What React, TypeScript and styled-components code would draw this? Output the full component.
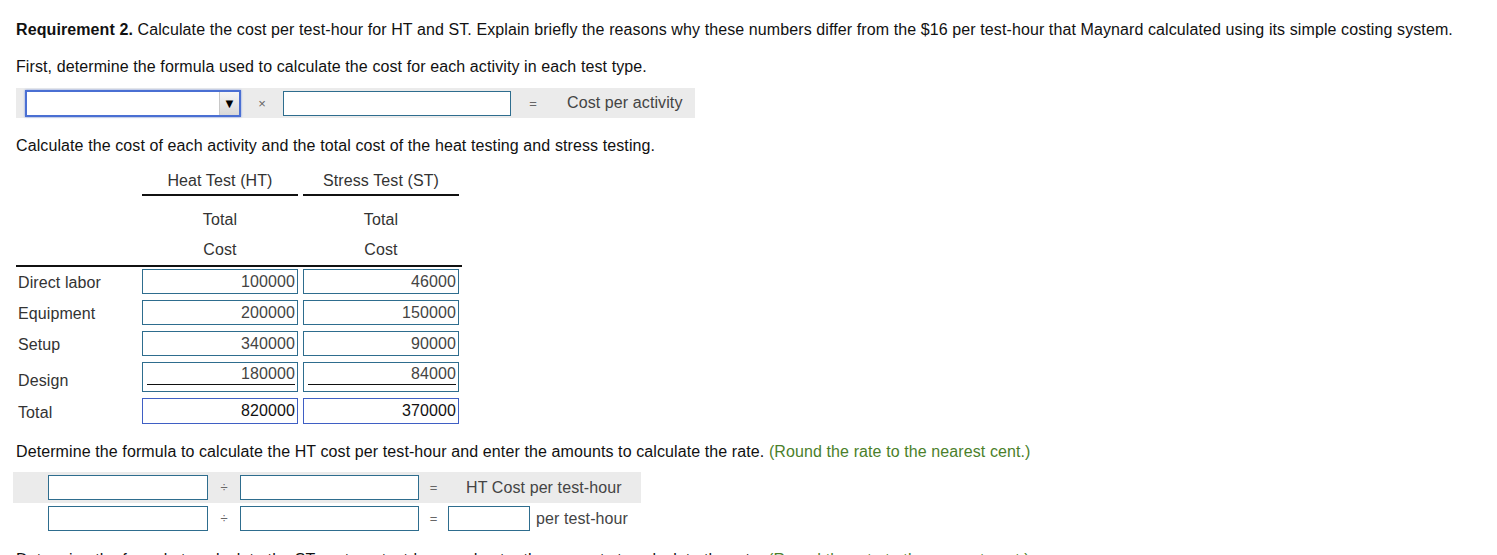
import React from "react";
import styled, { createGlobalStyle } from "styled-components";

const GlobalStyle = createGlobalStyle`
  body {
    margin: 0;
    background: #fff;
    font-family: "Liberation Sans", Arial, sans-serif;
    font-size: 16px;
    letter-spacing: 0.1px;
    color: #222;
  }
`;

const Page = styled.div`
  padding: 21px 0 0 16px;
  height: 555px;
  box-sizing: border-box;
  overflow: hidden;
`;

const Para = styled.p<{ $top: number }>`
  margin: ${(p) => p.$top}px 0 0;
  line-height: 18px;
  color: #111;
  white-space: nowrap;
`;

const Hint = styled.span`
  color: #4b7f2b;
`;

// formula bar
const FormulaBar = styled.div`
  margin-top: 12px;
  width: 679px;
  height: 30px;
  background: #ebebeb;
  display: flex;
  align-items: center;
  padding-left: 9px;
  box-sizing: border-box;
`;

const Select = styled.div`
  width: 216px;
  height: 27px;
  box-sizing: border-box;
  border: 2px solid #4a6fd3;
  box-shadow: 0 0 2px #7b95e0;
  background: #fff;
  display: flex;
  justify-content: flex-end;
`;

const SelectArrow = styled.div`
  width: 19px;
  background: linear-gradient(#f6f6f6, #d8d8d8);
  border-left: 1px solid #c8c8c8;
  display: flex;
  align-items: center;
  justify-content: center;
  font-size: 13px;
  color: #000;
`;

const Op = styled.span<{ $w: number }>`
  width: ${(p) => p.$w}px;
  text-align: center;
  color: #666;
  font-size: 13px;
  flex-shrink: 0;
`;

const Box = styled.div<{ $w: number; $h?: number }>`
  width: ${(p) => p.$w}px;
  height: ${(p) => p.$h ?? 25}px;
  box-sizing: border-box;
  border: 1px solid #2e6d8e;
  background: #fff;
  flex-shrink: 0;
`;

const BarLabel = styled.span<{ $ml: number }>`
  margin-left: ${(p) => p.$ml}px;
  color: #444;
  white-space: nowrap;
`;

// table
const Table = styled.div`
  margin-top: 13px;
  width: 446px;
`;

const HeadRow = styled.div`
  display: flex;
  padding-left: 126px;
  gap: 5px;
`;

const HeadCell = styled.div`
  width: 156px;
  text-align: center;
  color: #333;
  line-height: 26px;
  border-bottom: 2px solid #111;
`;

const SubHead = styled.div`
  display: flex;
  padding-left: 126px;
  gap: 5px;
  margin-top: 9px;
  border-bottom: 2px solid #111;
`;

const SubCell = styled.div`
  width: 156px;
  text-align: center;
  color: #333;
  line-height: 30px;
`;

const Rows = styled.div`
  display: flex;
  flex-direction: column;
  gap: 6px;
  margin-top: 2px;
`;

const Row = styled.div`
  display: flex;
  align-items: flex-end;
  gap: 5px;
`;

const RowLabel = styled.div`
  width: 119px;
  padding-left: 2px;
  color: #333;
  line-height: 22px;
`;

const Amount = styled.div<{ $h: number; $total?: boolean; $under?: boolean }>`
  width: 156px;
  height: ${(p) => p.$h}px;
  box-sizing: border-box;
  border: 1px solid ${(p) => (p.$total ? "#3f5fc4" : "#2e6d8e")};
  padding: 0 2px 0 4px;
  display: flex;
  flex-direction: column;
  justify-content: ${(p) => (p.$under ? "flex-start" : "center")};
  color: ${(p) => (p.$total ? "#111" : "#444")};
`;

const AmountText = styled.div<{ $under?: boolean }>`
  text-align: right;
  line-height: 20px;
  padding-top: ${(p) => (p.$under ? "1px" : "0")};
  border-bottom: ${(p) => (p.$under ? "1px solid #111" : "none")};
`;

// rate rows
const RateBlock = styled.div`
  margin-top: 11px;
`;

const RateBar = styled.div<{ $shade?: boolean }>`
  width: 628px;
  height: 31px;
  margin-left: -3px;
  padding-left: 35px;
  box-sizing: border-box;
  display: flex;
  align-items: center;
  background: ${(p) => (p.$shade ? "#ebebeb" : "transparent")};
`;

const rows = [
  { label: "Direct labor", ht: "100000", st: "46000", h: 25 },
  { label: "Equipment", ht: "200000", st: "150000", h: 25 },
  { label: "Setup", ht: "340000", st: "90000", h: 25 },
  { label: "Design", ht: "180000", st: "84000", h: 30, under: true },
  { label: "Total", ht: "820000", st: "370000", h: 26, total: true },
];

export default function App() {
  return (
    <Page>
      <GlobalStyle />
      <Para $top={0}>
        <b>Requirement 2.</b> Calculate the cost per test-hour for HT and ST. Explain briefly the
        reasons why these numbers differ from the $16 per test-hour that Maynard calculated using
        its simple costing system.
      </Para>
      <Para $top={19}>
        First, determine the formula used to calculate the cost for each activity in each test type.
      </Para>

      <FormulaBar>
        <Select>
          <SelectArrow>▼</SelectArrow>
        </Select>
        <Op $w={42}>×</Op>
        <Box $w={228} />
        <Op $w={44}>=</Op>
        <BarLabel $ml={12}>Cost per activity</BarLabel>
      </FormulaBar>

      <Para $top={19}>
        Calculate the cost of each activity and the total cost of the heat testing and stress
        testing.
      </Para>

      <Table>
        <HeadRow>
          <HeadCell>Heat Test (HT)</HeadCell>
          <HeadCell>Stress Test (ST)</HeadCell>
        </HeadRow>
        <SubHead>
          <SubCell>
            Total
            <br />
            Cost
          </SubCell>
          <SubCell>
            Total
            <br />
            Cost
          </SubCell>
        </SubHead>
        <Rows>
          {rows.map((r) => (
            <Row key={r.label}>
              <RowLabel>{r.label}</RowLabel>
              <Amount $h={r.h} $total={r.total} $under={r.under}>
                <AmountText $under={r.under}>{r.ht}</AmountText>
              </Amount>
              <Amount $h={r.h} $total={r.total} $under={r.under}>
                <AmountText $under={r.under}>{r.st}</AmountText>
              </Amount>
            </Row>
          ))}
        </Rows>
      </Table>

      <Para $top={19}>
        Determine the formula to calculate the HT cost per test-hour and enter the amounts to
        calculate the rate. <Hint>(Round the rate to the nearest cent.)</Hint>
      </Para>

      <RateBlock>
        <RateBar $shade>
          <Box $w={160} />
          <Op $w={32}>÷</Op>
          <Box $w={179} />
          <Op $w={29}>=</Op>
          <BarLabel $ml={18}>HT Cost per test-hour</BarLabel>
        </RateBar>
        <RateBar>
          <Box $w={160} />
          <Op $w={32}>÷</Op>
          <Box $w={179} />
          <Op $w={29}>=</Op>
          <Box $w={82} />
          <BarLabel $ml={6}>per test-hour</BarLabel>
        </RateBar>
      </RateBlock>

      <Para $top={17}>
        Determine the formula to calculate the ST cost per test-hour and enter the amounts to
        calculate the rate. <Hint>(Round the rate to the nearest cent.)</Hint>
      </Para>
    </Page>
  );
}
